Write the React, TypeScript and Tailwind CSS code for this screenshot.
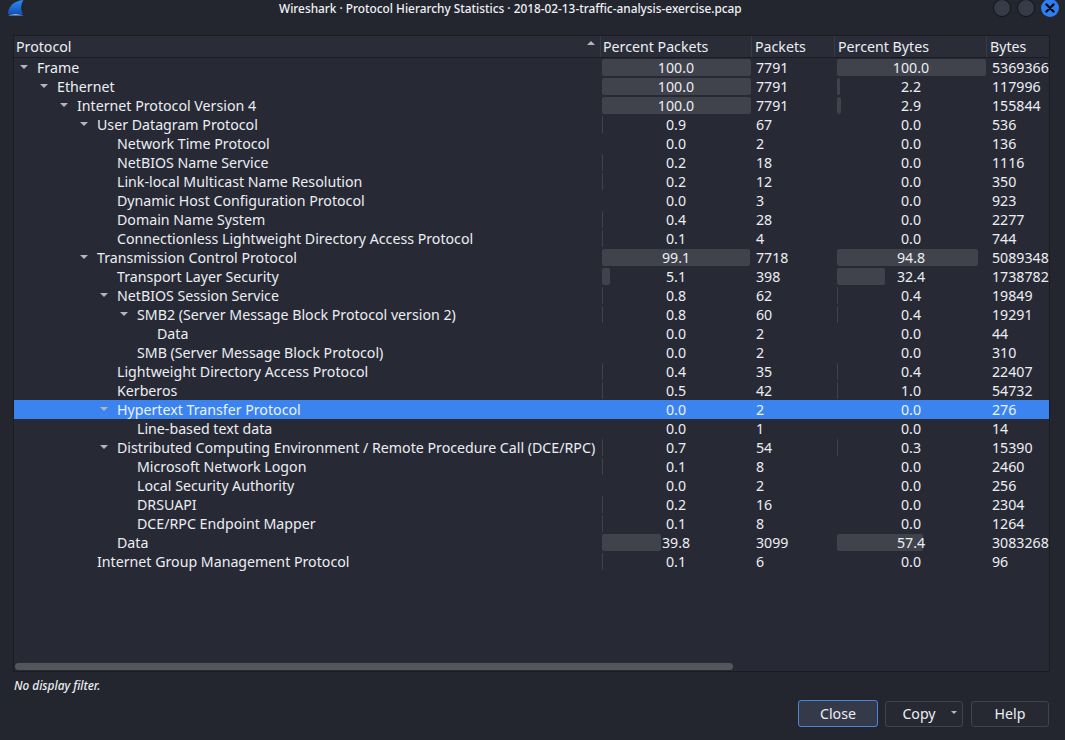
import React from 'react';

type Row = {
  name: string;
  depth: number;
  open?: boolean;
  pp: number;
  packets: number;
  pb: number;
  bytes: number;
};

const rows: Row[] = [
  { name: 'Frame', depth: 0, open: true, pp: 100.0, packets: 7791, pb: 100.0, bytes: 5369366 },
  { name: 'Ethernet', depth: 1, open: true, pp: 100.0, packets: 7791, pb: 2.2, bytes: 117996 },
  { name: 'Internet Protocol Version 4', depth: 2, open: true, pp: 100.0, packets: 7791, pb: 2.9, bytes: 155844 },
  { name: 'User Datagram Protocol', depth: 3, open: true, pp: 0.9, packets: 67, pb: 0.0, bytes: 536 },
  { name: 'Network Time Protocol', depth: 4, pp: 0.0, packets: 2, pb: 0.0, bytes: 136 },
  { name: 'NetBIOS Name Service', depth: 4, pp: 0.2, packets: 18, pb: 0.0, bytes: 1116 },
  { name: 'Link-local Multicast Name Resolution', depth: 4, pp: 0.2, packets: 12, pb: 0.0, bytes: 350 },
  { name: 'Dynamic Host Configuration Protocol', depth: 4, pp: 0.0, packets: 3, pb: 0.0, bytes: 923 },
  { name: 'Domain Name System', depth: 4, pp: 0.4, packets: 28, pb: 0.0, bytes: 2277 },
  { name: 'Connectionless Lightweight Directory Access Protocol', depth: 4, pp: 0.1, packets: 4, pb: 0.0, bytes: 744 },
  { name: 'Transmission Control Protocol', depth: 3, open: true, pp: 99.1, packets: 7718, pb: 94.8, bytes: 5089348 },
  { name: 'Transport Layer Security', depth: 4, pp: 5.1, packets: 398, pb: 32.4, bytes: 1738782 },
  { name: 'NetBIOS Session Service', depth: 4, open: true, pp: 0.8, packets: 62, pb: 0.4, bytes: 19849 },
  { name: 'SMB2 (Server Message Block Protocol version 2)', depth: 5, open: true, pp: 0.8, packets: 60, pb: 0.4, bytes: 19291 },
  { name: 'Data', depth: 6, pp: 0.0, packets: 2, pb: 0.0, bytes: 44 },
  { name: 'SMB (Server Message Block Protocol)', depth: 5, pp: 0.0, packets: 2, pb: 0.0, bytes: 310 },
  { name: 'Lightweight Directory Access Protocol', depth: 4, pp: 0.4, packets: 35, pb: 0.4, bytes: 22407 },
  { name: 'Kerberos', depth: 4, pp: 0.5, packets: 42, pb: 1.0, bytes: 54732 },
  { name: 'Hypertext Transfer Protocol', depth: 4, open: true, pp: 0.0, packets: 2, pb: 0.0, bytes: 276 },
  { name: 'Line-based text data', depth: 5, pp: 0.0, packets: 1, pb: 0.0, bytes: 14 },
  { name: 'Distributed Computing Environment / Remote Procedure Call (DCE/RPC)', depth: 4, open: true, pp: 0.7, packets: 54, pb: 0.3, bytes: 15390 },
  { name: 'Microsoft Network Logon', depth: 5, pp: 0.1, packets: 8, pb: 0.0, bytes: 2460 },
  { name: 'Local Security Authority', depth: 5, pp: 0.0, packets: 2, pb: 0.0, bytes: 256 },
  { name: 'DRSUAPI', depth: 5, pp: 0.2, packets: 16, pb: 0.0, bytes: 2304 },
  { name: 'DCE/RPC Endpoint Mapper', depth: 5, pp: 0.1, packets: 8, pb: 0.0, bytes: 1264 },
  { name: 'Data', depth: 4, pp: 39.8, packets: 3099, pb: 57.4, bytes: 3083268 },
  { name: 'Internet Group Management Protocol', depth: 3, pp: 0.1, packets: 6, pb: 0.0, bytes: 96 },
];

const SELECTED = 18;

const Arrow = ({ up }: { up?: boolean }) => (
  <svg width="8" height="4" viewBox="0 0 8 4" className={up ? 'rotate-180' : ''}>
    <path d="M0 0h8L4 4z" fill="#b4b6bb" />
  </svg>
);

const PercentCell = ({ value, selected }: { value: number; selected: boolean }) => (
  <div className="relative w-[152px] h-full shrink-0 px-[2px] py-px">
    <div className="relative h-full">
      {!selected && value > 0 && (
        <div
          className="absolute left-0 top-0 h-full rounded-[2px] bg-[#40434b]"
          style={{ width: Math.max(value * 1.49, 1) }}
        />
      )}
      <div className="relative text-center leading-[17px]">{value.toFixed(1)}</div>
    </div>
  </div>
);

const HeaderCell = ({ label, className }: { label: string; className: string }) => (
  <div className={`h-full shrink-0 border-r border-[#383b45] leading-[22px] ${className}`}>{label}</div>
);

const TreeRow = ({ row, selected }: { row: Row; selected: boolean }) => (
  <div className={`flex h-[19px] w-[1100px] ${selected ? 'bg-[#3b84f0] text-[#eaf2ff]' : ''}`}>
    <div className="relative w-[586px] shrink-0 whitespace-nowrap leading-[19px]">
      {row.open && (
        <span className="absolute top-[7px]" style={{ left: 6 + row.depth * 20 }}>
          <Arrow />
        </span>
      )}
      <span className="absolute" style={{ left: 23 + row.depth * 20 }}>
        {row.name}
      </span>
    </div>
    <PercentCell value={row.pp} selected={selected} />
    <div className="w-[83px] shrink-0 pl-[4px] leading-[19px]">{row.packets}</div>
    <PercentCell value={row.pb} selected={selected} />
    <div className="pl-[5px] leading-[19px]">{row.bytes}</div>
  </div>
);

const WinButton = ({ active }: { active?: boolean }) =>
  active ? (
    <div className="flex size-[18px] items-center justify-center rounded-full bg-[#2f7df0]">
      <svg width="10" height="10" viewBox="0 0 10 10">
        <path d="M1.5 1.5l7 7M8.5 1.5l-7 7" stroke="#0c0f16" strokeWidth="2.4" strokeLinecap="round" />
      </svg>
    </div>
  ) : (
    <div className="size-[18px] rounded-full border border-[#111318] bg-[#373a47]" />
  );

export default function App() {
  return (
    <div
      className="flex h-[740px] w-[1065px] flex-col overflow-hidden bg-[#23262f] text-[14.2px] text-[#eceef2]"
      style={{ fontFamily: '"Noto Sans", sans-serif' }}
    >
      <div className="flex h-[35px] shrink-0 items-start">
        <svg width="16" height="16" viewBox="0 0 16 16" className="ml-[8px] shrink-0">
          <defs>
            <linearGradient id="fin" x1="0" y1="0" x2="0" y2="1">
              <stop offset="0" stopColor="#2f8df0" />
              <stop offset="1" stopColor="#0f4fb8" />
            </linearGradient>
          </defs>
          <path d="M0 14.5C0 7 5 1 15.5 0 13 4 12 9 15 14.5z" fill="url(#fin)" />
          <path d="M0 15.5c5-2 10-2 15.5 0z" fill="#8fb4e4" />
        </svg>
        <div className="mt-[1px] ml-[255px] whitespace-nowrap text-[11.83px] font-medium leading-[14px] text-[#f0f1f4]">
          Wireshark · Protocol Hierarchy Statistics · 2018-02-13-traffic-analysis-exercise.pcap
        </div>
        <div className="ml-auto mr-[6px] mt-[-1px] flex gap-[6px]">
          <WinButton />
          <WinButton />
          <WinButton active />
        </div>
      </div>

      <div className="ml-[13px] mr-[15px] flex h-[637px] shrink-0 flex-col overflow-hidden border border-[#1a1c22] bg-[#272a35]">
        <div className="flex h-[22px] shrink-0 border-b border-[#1a1c22] bg-[#2a2d38]">
          <div className="relative h-full w-[587px] shrink-0 border-r border-[#383b45] pl-[2px] leading-[22px]">
            Protocol
            <span className="absolute right-[5px] top-[5px]">
              <Arrow up />
            </span>
          </div>
          <HeaderCell label="Percent Packets" className="w-[151px] pl-[2px]" />
          <HeaderCell label="Packets" className="w-[83px] pl-[3px]" />
          <HeaderCell label="Percent Bytes" className="w-[152px] pl-[3px]" />
          <div className="h-full flex-1 pl-[3px] leading-[22px]">Bytes</div>
        </div>
        <div className="flex-1 overflow-hidden">
          {rows.map((row, i) => (
            <TreeRow key={i} row={row} selected={i === SELECTED} />
          ))}
        </div>
        <div className="mb-px ml-px h-[7px] w-[718px] shrink-0 rounded-full bg-[#54565c]" />
      </div>

      <div className="mx-[14px] mt-[5px] text-[11.8px] font-medium italic leading-[16px]">No display filter.</div>

      <div className="mr-[16px] mt-[7px] flex items-center justify-end gap-[7px]">
        <button className="h-[27px] w-[80px] rounded-[3px] border border-[#4a86d8] bg-[#343a4a]">Close</button>
        <button className="relative h-[26px] w-[78px] rounded-[3px] border border-[#40434d] bg-[#262932] pr-[10px]">
          Copy
          <span className="absolute right-[5px] top-[9px] flex w-[6px]">
            <svg width="6" height="3" viewBox="0 0 6 3">
              <path d="M0 0h6L3 3z" fill="#b4b6bb" />
            </svg>
          </span>
        </button>
        <button className="ml-px h-[26px] w-[78px] rounded-[3px] border border-[#40434d] bg-[#262932]">Help</button>
      </div>
    </div>
  );
}
